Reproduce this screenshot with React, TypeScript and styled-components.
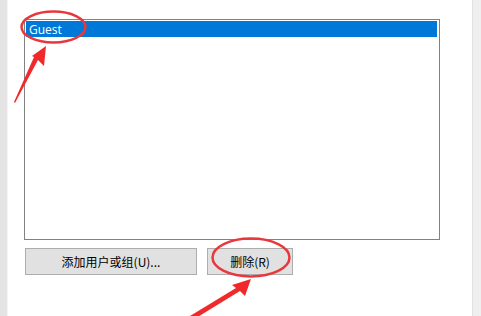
import React from "react";
import styled, { createGlobalStyle } from "styled-components";

const Global = createGlobalStyle`
  html, body { margin: 0; padding: 0; background: #ffffff; }
  body { width: 481px; height: 316px; overflow: hidden; font-family: "Noto Sans CJK SC", "Noto Sans", sans-serif; }
  #root { width: 481px; height: 316px; }
`;

const Frame = styled.div`
  position: relative;
  display: flex;
  width: 481px;
  height: 316px;
  overflow: hidden;
  background: #ffffff;
`;

const SideStrip = styled.div<{ $side: "left" | "right" }>`
  width: ${(p) => (p.$side === "left" ? "7px" : "8px")};
  flex: none;
  background: ${(p) => (p.$side === "left" ? "#e4e4e4" : "#efefef")};
  border-${(p) => (p.$side === "left" ? "right" : "left")}: 1px solid ${(p) => (p.$side === "left" ? "#f4f4f4" : "#e2e2e2")};
`;

const Main = styled.div`
  flex: 1;
  display: flex;
  flex-direction: column;
  padding: 19px 0 0 16px;
`;

const ListBox = styled.div`
  width: 413px;
  height: 217px;
  border: 1px solid #828282;
  background: #ffffff;
  padding: 1px 0 1px 1px;
  box-sizing: content-box;
`;

const Item = styled.div<{ $selected?: boolean }>`
  height: 16px;
  width: 411px;
  box-sizing: border-box;
  padding-left: 3px;
  display: flex;
  align-items: center;
  font-family: "Segoe UI", "Open Sans", "Noto Sans", sans-serif;
  font-size: 12px;
  color: ${(p) => (p.$selected ? "#ffffff" : "#000000")};
  background: ${(p) => (p.$selected ? "#0078d7" : "transparent")};
`;

const ButtonRow = styled.div`
  display: flex;
  gap: 10px;
  margin-top: 8px;
  padding-left: 1px;
`;

const Button = styled.div<{ $w: number }>`
  width: ${(p) => p.$w}px;
  height: 27px;
  box-sizing: border-box;
  border: 1px solid #adadad;
  background: #e1e1e1;
  display: flex;
  align-items: center;
  justify-content: center;
  font-family: "Noto Sans CJK SC", "Microsoft YaHei", sans-serif;
  font-size: 12px;
  color: #000000;
`;

const Overlay = styled.svg`
  position: absolute;
  left: 0;
  top: 0;
  pointer-events: none;
`;

export default function App() {
  return (
    <>
      <Global />
      <Frame>
        <SideStrip $side="left" />
        <Main>
          <ListBox>
            <Item $selected>Guest</Item>
          </ListBox>
          <ButtonRow>
            <Button $w={172}>添加用户或组(U)...</Button>
            <Button $w={86}>删除(R)</Button>
          </ButtonRow>
        </Main>
        <SideStrip $side="right" />
        <Overlay width="481" height="316" viewBox="0 0 481 316">
          <ellipse cx="53.5" cy="27" rx="32" ry="15.5" fill="none" stroke="#e8383d" strokeWidth="2.5" />
          <polygon points="46,46 44,66 38,60 15,103 14,102 34,57 32,56" fill="#f02a2a" />
          <ellipse cx="251" cy="257.5" rx="38.5" ry="19" fill="none" stroke="#e8383d" strokeWidth="2.5" />
          <polygon points="251,279 245,296 240,291 196,318 190,316 236,288 232,285" fill="#f02a2a" />
        </Overlay>
      </Frame>
    </>
  );
}
